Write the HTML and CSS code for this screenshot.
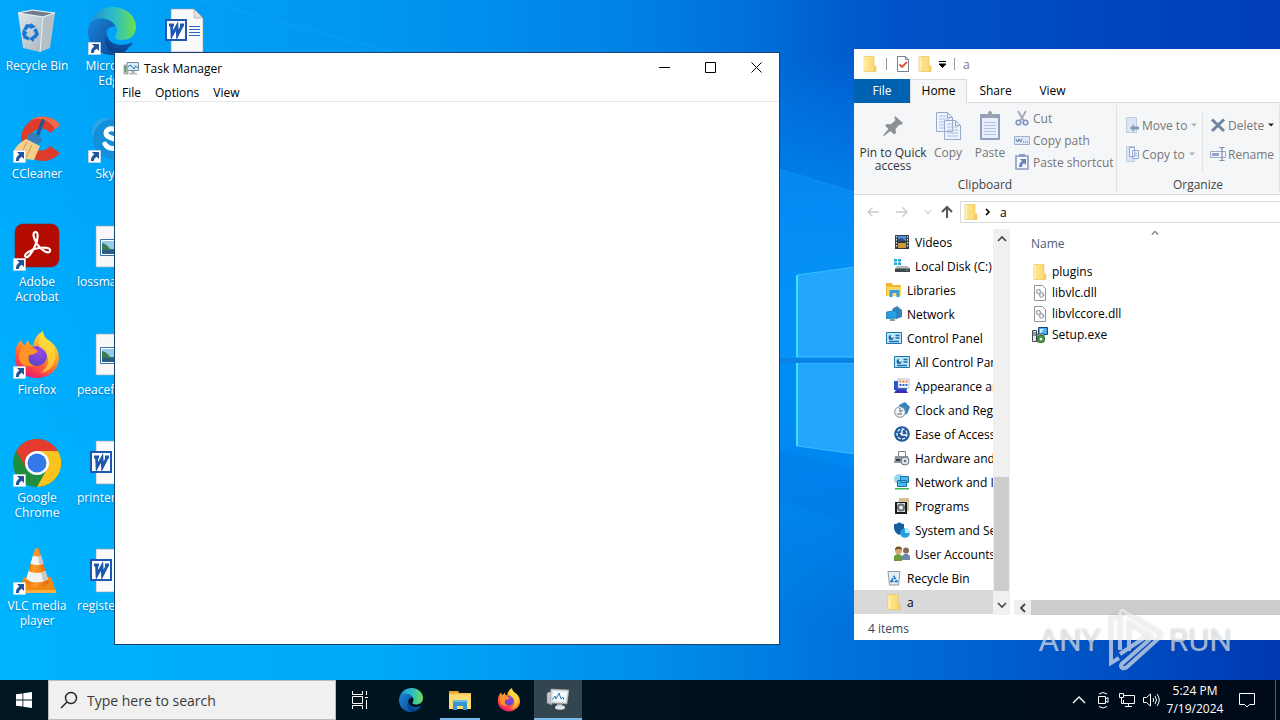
FILE: index.html
```
<!DOCTYPE html>
<html lang="en">
<head>
    <meta charset="UTF-8">
    <meta name="viewport" content="width=device-width, initial-scale=1.0">
    <title>Desktop</title>
    <link rel="stylesheet" href="styles.css">
</head>
<body>
    <!-- Icon shapes -->
    <svg class="sprite" aria-hidden="true">
        <defs>
            <linearGradient id="edge-a" x1="0" y1="0" x2="1" y2="0"><stop offset="0" stop-color="#1b8fd8"/><stop offset=".55" stop-color="#2fbfc4"/><stop offset="1" stop-color="#6be04c"/></linearGradient>
            <linearGradient id="edge-b" x1="0" y1="0" x2="1" y2="1"><stop offset="0" stop-color="#1c86d8"/><stop offset="1" stop-color="#0a4a9c"/></linearGradient>
            <linearGradient id="fx-a" x1=".8" y1="0" x2=".3" y2="1"><stop offset="0" stop-color="#fff04a"/><stop offset=".4" stop-color="#ffa62b"/><stop offset=".7" stop-color="#ff5a36"/><stop offset="1" stop-color="#e8127a"/></linearGradient>
            <radialGradient id="fx-b" cx=".6" cy=".3" r=".8"><stop offset="0" stop-color="#a044e0"/><stop offset="1" stop-color="#4c48c8"/></radialGradient>
            <linearGradient id="cone" x1="0" y1="0" x2="1" y2="0"><stop offset="0" stop-color="#e86e00"/><stop offset=".4" stop-color="#ff9a2a"/><stop offset="1" stop-color="#e06400"/></linearGradient>
            <linearGradient id="bin-g" x1="0" y1="0" x2="1" y2="1"><stop offset="0" stop-color="#dfe6ea"/><stop offset="1" stop-color="#a9b5bf"/></linearGradient>
            <linearGradient id="folder-g" x1="0" y1="0" x2="1" y2="0"><stop offset="0" stop-color="#ffe793"/><stop offset="1" stop-color="#fbd76b"/></linearGradient>
        </defs>
        <symbol id="i-shortcut" viewBox="0 0 13 13">
            <path fill="#fff" stroke="#b8c4cc" stroke-width=".5" d="M.3.3h12.4v12.4H.3z"/>
            <path fill="#22539c" d="M4 2h7v7L8.700 6.800Q5.800 8.300 5.700 11L3 11Q2.600 6.500 6.300 4.400z"/>
        </symbol>
        <symbol id="i-bin" viewBox="0 0 48 48">
            <path fill="url(#bin-g)" d="M5 6 30 10 27 45 10 41z"/>
            <path fill="#8f9ca6" d="M5 6 19 3 42 6 30 10z"/>
            <path fill="#6f7d88" d="M9 6 20 4 38 6 30 9z"/>
            <path fill="#b4c0c8" d="M30 10 42 6 37 41 27 45z"/>
            <path fill="none" stroke="#eef3f6" d="M5 6 30 10 42 6 19 3zM30 10 27 45"/>
            <path fill="none" stroke="#1477d4" stroke-width="3.500" d="M12 23l2-4 5 0M22 22l2 5-3 4M16 32l-4-2-1-4"/>
            <path fill="#1477d4" d="M18 16l5 4-6 2zM21 28v7l-5-3zM9 28l1-6 5 4z"/>
        </symbol>
        <symbol id="i-edge" viewBox="0 0 48 48">
            <path fill="url(#edge-a)" d="M1 20C4 7 13 0 25 0c13 0 23 9 23 20 0 9-7 13-14 13-5 0-8-2-7-4 3-3 3-9-2-13C17 9 4 11 1 20z"/>
            <path fill="url(#edge-b)" d="M0 24C0 14 9 10 17 12c6 1 10 5 10 8-6-2-10 4-9 12 1 7 5 12 9 16C12 49 0 39 0 24z"/>
            <path fill="#0d4f9e" d="M19 25c-3 9 3 20 14 19 5-1 9-4 11-7 1-1 0-2-1-1-12 5-25 0-24-11z"/>
            <path fill="#0a4690" d="M17 29c-1 11 5 19 13 18 4 0 8-3 11-6-11 4-21-1-24-12z"/>
        </symbol>
        <symbol id="i-word" viewBox="0 0 48 48">
            <path fill="#fafafa" stroke="#9a9a9a" stroke-width=".6" d="M8 2h23l9 9v34H8z"/>
            <path fill="#e3e3e3" stroke="#9a9a9a" stroke-width=".6" d="M31 2v9h9z"/>
            <path stroke="#2a66bb" stroke-width="1.200" d="M26 19.500h11M26 22.500h11M26 25.500h11M26 28.500h11"/>
            <path fill="#fff" stroke="#1d57b0" stroke-width="2" d="M3 13h20v20H3z"/>
            <path fill="none" stroke="#1d57b0" stroke-width="2.800" d="M6 18h5M8.500 18l.5 10 5-9 .5 9 5-10M17 18h4"/>
        </symbol>
        <symbol id="i-ccleaner" viewBox="0 0 48 48">
            <path fill="#dd3b2c" d="M47 10A22 22 0 1 0 47 38L37 31a11 11 0 1 1 0-13z"/>
            <path fill="#f26a4a" d="M47 10C40 0 25-1 16 6c10-4 20-2 26 8z"/>
            <path stroke="#25588f" stroke-width="3.500" stroke-linecap="round" d="M30 6 23 24"/>
            <path fill="#3180bd" d="M15 20c5-4 13-1 14 6l-5 5-11-5z"/>
            <path fill="#f3cf8c" d="M13 24 27 31 21 45 4 43C-2 38 1 31 13 24z"/>
            <path stroke="#cf9a4a" d="M14 27 7 41M19 30 13 43" fill="none"/>
        </symbol>
        <symbol id="i-skype" viewBox="0 0 48 48">
            <circle cx="18" cy="17" r="14" fill="#2ba6e8"/><circle cx="31" cy="31" r="14" fill="#1b9de2"/><circle cx="25" cy="24" r="20" fill="#1490da"/>
            <path fill="none" stroke="#fff" stroke-width="5" stroke-linecap="round" d="M31 17c-2-4-13-5-13 1 0 7 14 4 14 11 0 6-12 6-15 0"/>
        </symbol>
        <symbol id="i-acrobat" viewBox="0 0 48 48">
            <rect x="2" y="1" width="44" height="43" rx="8" fill="#b30b00" stroke="#7c2a2a" stroke-width=".6"/>
            <path fill="none" stroke="#fff" stroke-width="2.200" d="M22 9c4-1 3 8 0 14-3 7-7 12-9 11-4-2 5-8 13-9 7-1 12 0 11 3-1 4-9-1-13-7-3-5-5-11-2-12z"/>
        </symbol>
        <symbol id="i-picture" viewBox="0 0 48 48">
            <path fill="#f8f8f8" stroke="#a0a8b0" stroke-width=".6" d="M8 3h32v41H8z"/>
            <path fill="#fff" stroke="#3971a8" d="M12.500 16.500h23v16h-23z"/>
            <path fill="#98c8ea" d="M14 18h20v13H14z"/>
            <path fill="#397a4f" d="M14 20q5 1 8 6h12v2H14z"/><path fill="#285d86" d="M14 27h20v4H14z"/>
        </symbol>
        <symbol id="i-firefox" viewBox="0 0 48 48">
            <path fill="url(#fx-a)" d="M8 9q1 4 4 5l3-5q1 5 5 6 1-10 10-15 0 6 7 10 9 7 9 17a22 20 0 0 1-44 0Q1 16 8 9z"/>
            <circle cx="24" cy="25" r="10" fill="url(#fx-b)"/>
            <path fill="#ff9326" d="M9 16q5-3 12 1l4 3q-3 4-9 4-2 8 5 11Q5 37 6 24z"/>
            <path fill="#ffe03d" d="M30 1q0 6 7 10 7 7 5 18-3 12-15 13 11-7 7-18-2-5-8-8-1-8 4-15z" opacity=".7"/>
        </symbol>
        <symbol id="i-chrome" viewBox="0 0 48 48">
            <circle cx="24" cy="24" r="24" fill="#1e8e3e"/>
            <path fill="#fcc31e" d="M24 12h21A24 24 0 0 1 24 48l10-18z"/>
            <path fill="#e33b2e" d="M3.200 12A24 24 0 0 1 44.800 12H24a12 12 0 0 0-11 17z"/>
            <circle cx="24" cy="24" r="12" fill="#fff"/><circle cx="24" cy="24" r="9.500" fill="#3478ea"/>
        </symbol>
        <symbol id="i-vlc" viewBox="0 0 48 48">
            <path fill="#f28a10" d="M11 30h27l5 15H5z"/><path fill="#ffad3f" d="M5 43h38v3H5z"/>
            <path fill="url(#cone)" d="M22 2q2-2 4 0l10 34q-12 8-24 0z"/>
            <path fill="#f3f3f3" d="M20 8.500q4 2 8 0l2.500 8q-6.500 3-13 0zM15.500 24q8.500 4 17 0l2.500 8.500q-11 6-22 0z"/>
            <path fill="#c9c9c9" d="M25 9.200 28 8.500l2.500 8-4 1zM28 25.300l4.500-1.300 2.500 8.500-5 2z"/>
        </symbol>
        <symbol id="i-taskmgr" viewBox="0 0 16 16">
            <path fill="#b9c7b9" stroke="#7b8a80" stroke-width=".6" d="M1 5h4v9H1z"/><path fill="#48a055" d="M1.500 6h1.500v6H1.500z"/>
            <path fill="#d6edfa" stroke="#7a8a96" d="M4 2.500h11.500v8H4z"/>
            <path fill="none" stroke="#2578b5" d="M4.500 7.500 7 5l2 1.500L11 9l1.500-3L15 8"/>
            <path fill="#b5bdc4" d="M8 11h4v2H8zM6 13h8v1.500H6z"/>
        </symbol>
        <symbol id="i-folder" viewBox="0 0 16 16">
            <path fill="url(#folder-g)" stroke="#e6bd55" stroke-width=".6" d="M2 .5h10v10l2 0v5H2z"/>
            <path fill="#f4cb56" d="M12 10.500 13.700 9v5.500L12 15.500z"/><path fill="#fff2bd" d="M2.500 1H4v14H2.500z"/>
        </symbol>
        <symbol id="i-check" viewBox="0 0 16 16">
            <path fill="#fff" stroke="#77818d" d="M2.500.5h8l3 3v12h-11z"/><path fill="none" stroke="#77818d" d="M10.500.5v3h3"/>
            <path fill="none" stroke="#e2512f" stroke-width="1.800" d="M4.500 8.500 7 11l5-5"/>
        </symbol>
        <symbol id="i-pin" viewBox="0 0 24 24">
            <path fill="#8b9096" d="M14 2 22 9l-2 2-1.500-.5-4 4.500.5 4-2 1.500L9.500 17 3 22l-1-.5L7.500 15 4 11.500 6 10l4 .3 4.300-4L13.500 4z"/>
        </symbol>
        <symbol id="i-copy" viewBox="0 0 28 32">
            <path fill="#edf2fb" stroke="#98a9cc" d="M2.500 2.500h11l5 5v14h-16zM10.500 10.500h11l5 5v14h-16z"/>
            <path stroke="#adc0e4" d="M5 6h7M5 9h11M5 12h5M5 15h5M5 18h5M13 14h7M13 17h11M13 20h11M13 23h11M13 26h11"/>
            <path fill="none" stroke="#98a9cc" d="M13.500 2.500v5h5M21.500 10.500v5h5"/>
        </symbol>
        <symbol id="i-paste" viewBox="0 0 28 32">
            <rect x="4" y="4" width="20" height="26" rx="1" fill="#8fa0c1"/><path fill="#eaf0fb" d="M6 8h16v20H6z"/>
            <path stroke="#b2c1df" d="M8 12.500h12M8 15.500h12M8 18.500h12M8 21.500h12M8 24.500h12"/>
            <path fill="#9aa3b2" d="M8 4h4q0-3 2-3t2 3h4v4H8z"/>
        </symbol>
        <symbol id="i-cut" viewBox="0 0 16 16">
            <path stroke="#a0a8b5" stroke-width="1.800" d="M4 1l6 10M12 1 6 11"/>
            <circle cx="4.500" cy="12.500" r="2.300" fill="none" stroke="#8193bc" stroke-width="1.600"/><circle cx="11.500" cy="12.500" r="2.300" fill="none" stroke="#8193bc" stroke-width="1.600"/>
        </symbol>
        <symbol id="i-path" viewBox="0 0 16 16">
            <path fill="#dae5f6" stroke="#9fb0cf" d="M.5 4.500h15v8H.5z"/><path fill="none" stroke="#6078a5" d="M2 7l1.500 3L5 7l1.500 3L8 7M9 10h1M11 10h1M13 10h1"/>
        </symbol>
        <symbol id="i-pasteshort" viewBox="0 0 16 16">
            <path fill="#f4f7fd" stroke="#8b9cc0" stroke-width="1.600" d="M2 2h12v13H2z"/><path fill="#8b9cc0" d="M5 0h6v3H5z"/>
            <path fill="#6481b8" d="M6 5h6v6L10 9q-2 1-2 4H5q0-4 3-6z"/>
        </symbol>
        <symbol id="i-moveto" viewBox="0 0 16 16">
            <path fill="#dce5f3" stroke="#c0cce0" d="M2.500.5h10v15h-10z"/><path fill="#8799bd" d="M6 11l4-4v2.500h5v3h-5V15z"/>
        </symbol>
        <symbol id="i-copyto" viewBox="0 0 16 16">
            <path fill="#dce5f3" stroke="#c0cce0" d="M2.500.5h8v15h-8z"/><path fill="#f4f7fd" stroke="#95a7cb" d="M5.500 1.500h5v9h-5zM8.500 4.500h6v8h-6z"/><path stroke="#95a7cb" d="M10 7.500h3M10 9.500h3"/>
        </symbol>
        <symbol id="i-delete" viewBox="0 0 16 16"><path stroke="#7182a3" stroke-width="3" d="M2 2.500 14 14M14 2.500 2 14"/></symbol>
        <symbol id="i-rename" viewBox="0 0 16 16">
            <path fill="#f3f6fc" stroke="#9cabc9" d="M.5 5.500h15v6H.5z"/><path fill="#8fa2c8" d="M2 7h7v3H2z"/><path fill="none" stroke="#7d8ead" stroke-width="1.200" d="M9.500 1.500h5M12 1.500v13M9.500 14.500h5"/>
        </symbol>
        <symbol id="i-back" viewBox="0 0 14 14"><path fill="none" stroke="currentColor" stroke-width="1.400" d="M13 7H2M6.500 2.500 2 7l4.500 4.500"/></symbol>
        <symbol id="i-forward" viewBox="0 0 14 14"><path fill="none" stroke="currentColor" stroke-width="1.400" d="M1 7h11M7.500 2.500 12 7l-4.500 4.500"/></symbol>
        <symbol id="i-up" viewBox="0 0 14 14"><path fill="none" stroke="currentColor" stroke-width="2" d="M7 13V2M2 7l5-5 5 5"/></symbol>
        <symbol id="i-chev-up" viewBox="0 0 10 10"><path fill="none" stroke="currentColor" stroke-width="1.600" d="M1 7l4-4 4 4"/></symbol>
        <symbol id="i-chev-down" viewBox="0 0 10 10"><path fill="none" stroke="currentColor" stroke-width="1.600" d="M1 3l4 4 4-4"/></symbol>
        <symbol id="i-chev-left" viewBox="0 0 10 10"><path fill="none" stroke="currentColor" stroke-width="1.800" d="M7 1 3 5l4 4"/></symbol>
        <symbol id="i-chev-right" viewBox="0 0 10 10"><path fill="none" stroke="currentColor" stroke-width="1.600" d="M3 2l3 3-3 3"/></symbol>
        <symbol id="i-drop" viewBox="0 0 6 4"><path fill="currentColor" d="M0 .5h6L3 3.500z"/></symbol>
        <symbol id="i-video" viewBox="0 0 16 16">
            <path fill="#343a40" d="M1 1h14v14H1z"/><path fill="#4d8fe0" d="M4 2h8v5H4z"/><path fill="#c79a35" d="M4 9h8v5H4z"/><path fill="#28507a" d="M4 5l4-1 4 3H4z"/>
            <path stroke="#dde4ea" stroke-width="1.200" stroke-dasharray="1.500 1.500" d="M2.500 2v12M13.500 2v12"/>
        </symbol>
        <symbol id="i-disk" viewBox="0 0 16 16">
            <path fill="#19a8d8" d="M0 1h3v2.500H0zM4 1h3v2.500H4zM0 4.500h3V7H0zM4 4.500h3V7H4z"/><path fill="#b5bbc0" d="M3 8h11l2 3H1z"/><path fill="#3e454b" d="M1 10.500h15V14H1z"/><path fill="#34d158" d="M12 11.500h2v1h-2z"/>
        </symbol>
        <symbol id="i-library" viewBox="0 0 16 16">
            <path fill="#f2b632" d="M0 1h6l1 2h8v11H0z"/><path fill="#ffd968" d="M1 5h14v9H1z"/><path fill="none" stroke="#3d98dd" stroke-width="3" d="M5 15V9.500h7V15"/>
        </symbol>
        <symbol id="i-network" viewBox="0 0 16 16">
            <path fill="#3c81b5" d="M6 3 11 0l5 4v7l-6 2z"/><path fill="#28a0e5" stroke="#1371ad" stroke-width=".8" d="M0.500 6 11 4.500v7.500L.5 12.500z"/><path fill="#7f9aad" d="M4 13h5v2H4z"/>
        </symbol>
        <symbol id="i-cpl" viewBox="0 0 16 16">
            <path fill="#b9e6fa" stroke="#1f75a9" d="M.5 2.500h15v11H.5z"/><circle cx="5" cy="7.500" r="2.500" fill="#246ba5"/><path fill="#fff" d="M5 7.500V5a2.500 2.500 0 0 1 2.500 2.500z"/><path stroke="#1c6da8" stroke-width="1.400" d="M9.500 5.500h4M9.500 8h4M3 11.500h10"/>
        </symbol>
        <symbol id="i-appearance" viewBox="0 0 16 16">
            <path fill="#2d55c9" d="M0 3h13v9H0z"/><path fill="#fff" stroke="#8090b0" stroke-width=".6" d="M4 1h11v9H4z"/><path stroke="#ef7230" stroke-width="2" stroke-dasharray="2 1" d="M5.500 3.500H14"/><path stroke="#3562c8" stroke-width="2" stroke-dasharray="2 1" d="M5.500 7H14"/><path fill="#3530b5" d="M2 12h10l2 3H0z"/>
        </symbol>
        <symbol id="i-clock" viewBox="0 0 16 16">
            <path fill="#3484bd" d="M5 3 11 0l5 5-3 7-5 1z"/><circle cx="6" cy="10" r="5.300" fill="#f2f5f7" stroke="#81909c"/><path fill="none" stroke="#4d6475" d="M6 6v4l3-2M3 12h5"/>
        </symbol>
        <symbol id="i-ease" viewBox="0 0 16 16">
            <circle cx="8" cy="8" r="7.800" fill="#1b5b9e"/><circle cx="8" cy="8" r="5" fill="none" stroke="#fff" stroke-width="1.300" stroke-dasharray="3 1.500"/><path fill="none" stroke="#fff" stroke-width="1.400" d="M8 4v5h5M6 7l2 2"/>
        </symbol>
        <symbol id="i-hardware" viewBox="0 0 16 16">
            <path fill="#fff" stroke="#7b8790" d="M4.500 1.500h7v5h-7z"/><path fill="#8d979f" d="M1 6h13l1 7H0z"/><circle cx="11" cy="11" r="4" fill="#dce2e6" stroke="#65717a"/><circle cx="11" cy="11" r="1.200" fill="#65717a"/><path fill="#333b42" d="M2 9h4v2H2z"/>
        </symbol>
        <symbol id="i-netint" viewBox="0 0 16 16">
            <circle cx="5" cy="5" r="5" fill="#9ad3ed"/><path fill="#4eb9ed" stroke="#1676a8" d="M6.500 2.500h8v6h-8zM3.500 6.500h9v6h-9z"/><path fill="#41b44b" d="M1 14h14v1.500H1z"/>
        </symbol>
        <symbol id="i-programs" viewBox="0 0 16 16">
            <path fill="#d9bd93" d="M5 0h10v13H5z"/><path fill="#191b1d" d="M1 4h12v12H1z"/><path fill="#dfe2e4" d="M3 5h8v9H3z"/><circle cx="7" cy="9.500" r="4" fill="#6a7277"/><circle cx="7" cy="9.500" r="2" fill="#e8f0ec"/>
        </symbol>
        <symbol id="i-system" viewBox="0 0 16 16">
            <path fill="#175e9c" d="M0 2q4 0 5-2 2 2 5 2v5q-1 4-5 6Q0 10 0 6z"/><circle cx="11" cy="11" r="4.800" fill="#249fe3"/><path fill="#b5e7ff" d="M11 11V6a5 5 0 0 1 5 5z"/>
        </symbol>
        <symbol id="i-users" viewBox="0 0 16 16">
            <circle cx="4.500" cy="4.500" r="3.500" fill="#d7a66e"/><circle cx="12" cy="4.500" r="3" fill="#8a6a50"/><path fill="#6a9e3c" d="M0 15V10q4-4 8 0v5z"/><path fill="#6d88aa" d="M8 14v-4q4-5 8 0v4z"/><path fill="#7b4f2b" d="M1 4q0-4 4-3.500 3 0 3 3-4-1-7 .5z"/>
        </symbol>
        <symbol id="i-smallbin" viewBox="0 0 16 16">
            <path fill="#e6edf1" stroke="#8e9ba5" d="M2 1.500h12L12.500 15h-9z"/><path fill="none" stroke="#1477d4" stroke-width="1.600" stroke-dasharray="4 1" d="M5 11.500 8 6.500l3 5z"/>
        </symbol>
        <symbol id="i-dll" viewBox="0 0 16 16">
            <path fill="#fff" stroke="#8f959b" d="M2.500.5h8l3 3v12h-11z"/><circle cx="6.500" cy="6.500" r="2" fill="none" stroke="#8d959b" stroke-width="1.600" stroke-dasharray="1 .5"/><circle cx="9.500" cy="10" r="2" fill="none" stroke="#8d959b" stroke-width="1.600" stroke-dasharray="1 .5"/>
        </symbol>
        <symbol id="i-setup" viewBox="0 0 16 16">
            <path fill="#4caff2" stroke="#174970" d="M6.500.5h9v7h-9z"/><path fill="#c9e9ff" d="M8 2h4L9 6H8z"/><path fill="#e3e5e8" stroke="#454b51" d="M.5 3.500h4v11h-4z"/><path stroke="#454b51" d="M1 6h3M1 8h3"/><path fill="#a7aeb5" stroke="#333" stroke-width=".6" d="M5 7h7v8H5z"/><circle cx="9" cy="12" r="3.700" fill="#4c9e43" stroke="#1f5e21" stroke-width=".7"/><circle cx="9" cy="12" r="1.200" fill="#fff"/>
        </symbol>
        <symbol id="i-explorer" viewBox="0 0 24 24">
            <path fill="#e8a723" d="M1 3h9l2 3H1z"/><path fill="#ffdc72" d="M1 5h22v16H1z"/><path fill="#f2c14a" d="M1 5h22v1.500H1z"/><path fill="#3b95d4" d="M5 13h14v9h-4v-4H9v4H5z"/><path fill="#6fbceb" d="M5 12h14v2H5z"/>
        </symbol>
        <symbol id="i-monitor" viewBox="0 0 24 24">
            <path fill="#c8cccf" stroke="#7e8589" stroke-width=".6" d="M1 6l5-2v14l-5-2z"/><path fill="#d6dadd" stroke="#959b9f" stroke-width=".6" d="M5 2l18 1-2 14-17-1z"/><path fill="#f8fcff" d="M7 4l14 1-1.500 10L6 14z"/><path fill="none" stroke="#287abb" d="M6 13l3-4 1 3 3-6 2 6 2-2 1 3"/><path fill="#9da4a8" d="M11 17h5v2h-5z"/><ellipse cx="14" cy="20.500" rx="5" ry="2.200" fill="#e2e5e7"/>
        </symbol>
    </svg>

    <!-- Wallpaper -->
    <svg class="wallpaper" viewBox="0 0 1280 720" preserveAspectRatio="none" aria-hidden="true">
        <defs>
            <linearGradient id="sky" x1="0" y1="0" x2="1" y2="0"><stop offset="0" stop-color="#00a8fb"/><stop offset=".3" stop-color="#0096f0"/><stop offset=".5" stop-color="#0080e4"/><stop offset=".6" stop-color="#006cd8"/><stop offset=".7" stop-color="#0052c8"/><stop offset="1" stop-color="#003eb8"/></linearGradient>
            <linearGradient id="floor" x1="0" y1="0" x2="1" y2="0"><stop offset="0" stop-color="#00b4ff"/><stop offset=".3" stop-color="#00a8f8"/><stop offset=".5" stop-color="#0090ea"/><stop offset=".65" stop-color="#0074dc"/><stop offset=".8" stop-color="#005ccc"/><stop offset="1" stop-color="#0038b2"/></linearGradient>
            <linearGradient id="fade" x1="0" y1="0" x2="0" y2="1"><stop offset=".1" stop-color="#000"/><stop offset=".8" stop-color="#fff"/></linearGradient>
            <mask id="low"><path fill="url(#fade)" d="M0 0h1280v720H0z"/></mask>
            <radialGradient id="glow" cx="880" cy="340" r="290" gradientUnits="userSpaceOnUse"><stop offset="0" stop-color="#00a0ff" stop-opacity=".9"/><stop offset=".5" stop-color="#0095ff" stop-opacity=".6"/><stop offset="1" stop-color="#0095ff" stop-opacity="0"/></radialGradient>
        </defs>
        <path fill="url(#sky)" d="M0 0h1280v720H0z"/>
        <path fill="url(#floor)" mask="url(#low)" d="M0 0h1280v720H0z"/>
        <path fill="url(#glow)" d="M0 0h1280v720H0z"/>
        <path fill="#0d98ff" opacity=".4" d="M779 169 880 200v160H779z"/>
        <path stroke="#2aa4f5" opacity=".4" d="M200 0 420 60M779 169 880 200"/>
        <path fill="#006fe0" opacity=".2" d="M780 450 880 475v60L780 500z"/>
        <path fill="#24a6ff" stroke="#35bfff" d="M797 275 870 265v92h-73zM797 363h73v93l-73-10z"/>
        <path fill="#0a82e6" d="M780 358h90v5h-90z"/>
        <path stroke="#3de0ff" stroke-width="2" d="M797 275v82M797 363v83"/>
    </svg>

    <main class="desktop">
        <a class="shortcut" href="#"><svg><use href="#i-bin"/></svg><span>Recycle Bin</span></a>
        <a class="shortcut" href="#"><svg><use href="#i-ccleaner"/></svg><svg class="arrow"><use href="#i-shortcut"/></svg><span>CCleaner</span></a>
        <a class="shortcut" href="#"><svg><use href="#i-acrobat"/></svg><svg class="arrow"><use href="#i-shortcut"/></svg><span>Adobe Acrobat</span></a>
        <a class="shortcut" href="#"><svg><use href="#i-firefox"/></svg><svg class="arrow"><use href="#i-shortcut"/></svg><span>Firefox</span></a>
        <a class="shortcut" href="#"><svg><use href="#i-chrome"/></svg><svg class="arrow"><use href="#i-shortcut"/></svg><span>Google Chrome</span></a>
        <a class="shortcut" href="#"><svg><use href="#i-vlc"/></svg><svg class="arrow"><use href="#i-shortcut"/></svg><span>VLC media player</span></a>
        <a class="shortcut" href="#"><svg><use href="#i-edge"/></svg><svg class="arrow"><use href="#i-shortcut"/></svg><span>Microsoft Edge</span></a>
        <a class="shortcut" href="#"><svg><use href="#i-skype"/></svg><svg class="arrow"><use href="#i-shortcut"/></svg><span>Skype</span></a>
        <a class="shortcut" href="#"><svg><use href="#i-picture"/></svg><span>lossmany.jpg</span></a>
        <a class="shortcut" href="#"><svg><use href="#i-picture"/></svg><span>peacefull.jpg</span></a>
        <a class="shortcut" href="#"><svg><use href="#i-word"/></svg><span>printerme.rtf</span></a>
        <a class="shortcut" href="#"><svg><use href="#i-word"/></svg><span>registered.rtf</span></a>
        <a class="shortcut" href="#" aria-label="Document"><svg><use href="#i-word"/></svg></a>
    </main>

    <!-- Task Manager -->
    <section class="window task-manager">
        <header class="titlebar">
            <svg class="icon"><use href="#i-taskmgr"/></svg>
            <h1>Task Manager</h1>
            <div class="controls">
                <button type="button" aria-label="Minimize"><svg viewBox="0 0 11 11"><path d="M0 5.500h11"/></svg></button>
                <button type="button" aria-label="Maximize"><svg viewBox="0 0 11 11"><path d="M.5.5h10v10H.5z"/></svg></button>
                <button type="button" aria-label="Close"><svg viewBox="0 0 11 11"><path d="M.5.5l10 10M10.500.5l-10 10"/></svg></button>
            </div>
        </header>
        <nav class="menubar">
            <button type="button">File</button>
            <button type="button">Options</button>
            <button type="button">View</button>
        </nav>
    </section>

    <!-- File Explorer -->
    <section class="window explorer">
        <header class="quick-bar">
            <svg class="icon"><use href="#i-folder"/></svg>
            <i class="bar"></i>
            <button type="button" aria-label="Properties"><svg class="icon"><use href="#i-check"/></svg></button>
            <button type="button" aria-label="New folder"><svg class="icon"><use href="#i-folder"/></svg></button>
            <button type="button" class="customize" aria-label="Customize"><svg viewBox="0 0 7 7"><path d="M0 .5h7M0 3h7L3.500 6.500z"/></svg></button>
            <i class="bar"></i>
            <h2>a</h2>
        </header>
        <nav class="tabs">
            <a class="file-tab" href="#">File</a>
            <a class="active" href="#">Home</a>
            <a href="#">Share</a>
            <a href="#">View</a>
        </nav>
        <div class="ribbon">
            <div class="group clipboard">
                <div class="tools">
                    <button type="button" class="big pin"><svg><use href="#i-pin"/></svg><span>Pin to Quick access</span></button>
                    <button type="button" class="big off"><svg><use href="#i-copy"/></svg><span>Copy</span></button>
                    <button type="button" class="big off"><svg><use href="#i-paste"/></svg><span>Paste</span></button>
                    <div class="stack">
                        <button type="button" class="small"><svg class="icon"><use href="#i-cut"/></svg>Cut</button>
                        <button type="button" class="small"><svg class="icon"><use href="#i-path"/></svg>Copy path</button>
                        <button type="button" class="small"><svg class="icon"><use href="#i-pasteshort"/></svg>Paste shortcut</button>
                    </div>
                </div>
                <p>Clipboard</p>
            </div>
            <div class="group organize">
                <div class="tools">
                    <div class="stack wide">
                        <button type="button" class="small"><svg class="icon"><use href="#i-moveto"/></svg>Move to<svg class="drop"><use href="#i-drop"/></svg></button>
                        <button type="button" class="small"><svg class="icon"><use href="#i-copyto"/></svg>Copy to<svg class="drop"><use href="#i-drop"/></svg></button>
                    </div>
                    <div class="stack wide">
                        <button type="button" class="small"><svg class="icon"><use href="#i-delete"/></svg>Delete<svg class="drop dark"><use href="#i-drop"/></svg></button>
                        <button type="button" class="small"><svg class="icon"><use href="#i-rename"/></svg>Rename</button>
                    </div>
                </div>
                <p>Organize</p>
            </div>
        </div>
        <div class="address-row">
            <button type="button" class="faint" aria-label="Back"><svg><use href="#i-back"/></svg></button>
            <button type="button" class="faint" aria-label="Forward"><svg><use href="#i-forward"/></svg></button>
            <button type="button" class="faint recent" aria-label="Recent locations"><svg><use href="#i-chev-down"/></svg></button>
            <button type="button" class="up" aria-label="Up"><svg><use href="#i-up"/></svg></button>
            <div class="address">
                <svg class="icon"><use href="#i-folder"/></svg>
                <svg class="crumb"><use href="#i-chev-right"/></svg>
                <a href="#">a</a>
            </div>
        </div>
        <div class="content">
            <nav class="tree">
                <a class="deep" href="#"><svg class="icon"><use href="#i-video"/></svg>Videos</a>
                <a class="deep" href="#"><svg class="icon"><use href="#i-disk"/></svg>Local Disk (C:)</a>
                <a href="#"><svg class="icon"><use href="#i-library"/></svg>Libraries</a>
                <a href="#"><svg class="icon"><use href="#i-network"/></svg>Network</a>
                <a href="#"><svg class="icon"><use href="#i-cpl"/></svg>Control Panel</a>
                <a class="deep" href="#"><svg class="icon"><use href="#i-cpl"/></svg>All Control Panel Items</a>
                <a class="deep" href="#"><svg class="icon"><use href="#i-appearance"/></svg>Appearance and Personalization</a>
                <a class="deep" href="#"><svg class="icon"><use href="#i-clock"/></svg>Clock and Region</a>
                <a class="deep" href="#"><svg class="icon"><use href="#i-ease"/></svg>Ease of Access</a>
                <a class="deep" href="#"><svg class="icon"><use href="#i-hardware"/></svg>Hardware and Sound</a>
                <a class="deep" href="#"><svg class="icon"><use href="#i-netint"/></svg>Network and Internet</a>
                <a class="deep" href="#"><svg class="icon"><use href="#i-programs"/></svg>Programs</a>
                <a class="deep" href="#"><svg class="icon"><use href="#i-system"/></svg>System and Security</a>
                <a class="deep" href="#"><svg class="icon"><use href="#i-users"/></svg>User Accounts</a>
                <a href="#"><svg class="icon"><use href="#i-smallbin"/></svg>Recycle Bin</a>
                <a class="selected" href="#"><svg class="icon"><use href="#i-folder"/></svg>a</a>
            </nav>
            <div class="scroll-v">
                <button type="button" aria-label="Scroll up"><svg><use href="#i-chev-up"/></svg></button>
                <div class="thumb"></div>
                <button type="button" aria-label="Scroll down"><svg><use href="#i-chev-down"/></svg></button>
            </div>
            <div class="files">
                <table>
                    <thead>
                        <tr><th>Name<svg class="sort"><use href="#i-chev-up"/></svg></th></tr>
                    </thead>
                    <tbody>
                        <tr><td><svg class="icon"><use href="#i-folder"/></svg>plugins</td></tr>
                        <tr><td><svg class="icon"><use href="#i-dll"/></svg>libvlc.dll</td></tr>
                        <tr><td><svg class="icon"><use href="#i-dll"/></svg>libvlccore.dll</td></tr>
                        <tr><td><svg class="icon"><use href="#i-setup"/></svg>Setup.exe</td></tr>
                    </tbody>
                </table>
                <div class="scroll-h">
                    <button type="button" aria-label="Scroll left"><svg><use href="#i-chev-left"/></svg></button>
                    <div class="thumb"></div>
                </div>
            </div>
        </div>
        <footer class="status">4 items</footer>
    </section>

    <div class="watermark">
        <span>ANY</span>
        <svg viewBox="0 0 56 64"><path d="M12 9H4v46l8-5M13 4v38M13 4q2-3 5 0l34 20q3 3 0 6L20 59q-5 3-6-1 0-2 3-4l25-22q3-3 0-5L22 15v28M13 46l27-18"/></svg>
        <span>RUN</span>
    </div>

    <!-- Taskbar -->
    <footer class="taskbar">
        <button type="button" class="start" aria-label="Start"><svg viewBox="0 0 16 16"><path d="M0 2.300 6.500 1.400v6.200H0zM7.300 1.300 16 0v7.600H7.300zM0 8.400h6.500v6.200L0 13.700zM7.300 8.400H16V16l-8.700-1.300z"/></svg></button>
        <label class="search">
            <svg viewBox="0 0 18 18"><circle cx="11" cy="7" r="5.500"/><path d="M7 11 1 17"/></svg>
            <input type="text" placeholder="Type here to search" aria-label="Search">
        </label>
        <div class="apps">
            <button type="button" class="view" aria-label="Task View"><svg viewBox="0 0 18 18"><path d="M1.500 0v3.500h10V0M1.500 5.500h10v7h-10zM1.500 18v-3.500h10V18M15.500 0v4M15.500 9v9M14 6.500h3"/></svg></button>
            <button type="button" aria-label="Microsoft Edge"><svg><use href="#i-edge"/></svg></button>
            <button type="button" class="running" aria-label="File Explorer"><svg><use href="#i-explorer"/></svg></button>
            <button type="button" aria-label="Firefox"><svg><use href="#i-firefox"/></svg></button>
            <button type="button" class="current" aria-label="Task Manager"><svg><use href="#i-monitor"/></svg></button>
        </div>
        <div class="tray">
            <button type="button" aria-label="Hidden icons"><svg viewBox="0 0 18 18"><path stroke-width="1.400" d="M3 12 9 6l6 6"/></svg></button>
            <button type="button" aria-label="Camera"><svg viewBox="0 0 18 18"><path d="M4.500 5.500h7v7h-7zM11.500 8l2.500-1.500v5L11.500 10M5 3Q9 0 13 3M5 15.500q4 3 8 0"/></svg></button>
            <button type="button" aria-label="Network"><svg viewBox="0 0 18 18"><path d="M6 4.500h10.500v8H5.500V9M10.500 12.500v3M7 15.500h7M1.500 2.500h4v4h-4zM3.500 6.500v6h2"/></svg></button>
            <button type="button" aria-label="Volume"><svg viewBox="0 0 18 18"><path d="M1.500 6.500h3l4-3.500v12l-4-3.500h-3zM11 7q1.500 2 0 4M13 5q3 4 0 8M15 3q4.500 6 0 12"/></svg></button>
            <div class="clock"><time>5:24 PM</time><time>7/19/2024</time></div>
            <button type="button" class="notes" aria-label="Notifications"><svg viewBox="0 0 18 18"><path d="M1.500 2.500h15v11h-5L9 16l-2.500-2.500h-5z"/></svg></button>
            <i class="peek"></i>
        </div>
    </footer>
</body>
</html>
```
FILE: styles.css
```
* {
    box-sizing: border-box;
}

html, body {
    height: 100%;
}

body {
    margin: 0;
    overflow: hidden;
    font-family: "Open Sans", "Noto Sans", sans-serif;
    font-size: 12px;
    line-height: 15px;
    color: #000;
    background-color: #0090f0;
}

h1, h2, p {
    margin: 0;
    font-size: 12px;
    font-weight: normal;
}

a {
    color: inherit;
    text-decoration: none;
}

button {
    display: flex;
    align-items: center;
    justify-content: center;
    padding: 0;
    border: none;
    background: none;
    font: inherit;
    color: inherit;
}

svg {
    display: block;
    flex: none;
}

.sprite {
    position: absolute;
    width: 0;
    height: 0;
}

.icon {
    width: 16px;
    height: 16px;
}

.wallpaper {
    position: absolute;
    inset: 0;
    width: 100%;
    height: 100%;
}

/* Desktop shortcuts */
.desktop {
    position: absolute;
    inset: 0 auto 40px 0;
    display: grid;
    grid-template-rows: repeat(6, 108px);
    grid-auto-columns: 75px;
    grid-auto-flow: column;
    padding-top: 7px;
}

.shortcut {
    position: relative;
    display: flex;
    flex-direction: column;
    align-items: center;
    gap: 3px;
    padding-right: 1px;
    color: #fff;
    text-align: center;
    text-shadow: 0 1px 2px rgba(0, 40, 90, 0.4);
}

.shortcut svg {
    width: 48px;
    height: 48px;
}

.shortcut span {
    width: 70px;
}

.shortcut .arrow {
    position: absolute;
    left: 13px;
    top: 35px;
    width: 13px;
    height: 13px;
}

/* Windows */
.window {
    position: absolute;
    display: flex;
    flex-direction: column;
    background-color: #fff;
}

.task-manager {
    left: 114px;
    top: 52px;
    width: 666px;
    height: 593px;
    border: 1px solid #17446f;
}

.titlebar {
    display: flex;
    align-items: center;
    height: 30px;
    padding-left: 8px;
}

.titlebar h1 {
    margin-left: 5px;
}

.controls {
    display: flex;
    height: 28px;
    margin-left: auto;
    align-self: flex-start;
}

.controls button {
    width: 46px;
}

.controls svg {
    width: 11px;
    height: 11px;
    fill: none;
    stroke: #000;
}

.menubar {
    display: flex;
    gap: 14px;
    height: 19px;
    padding-left: 7px;
    border-bottom: 1px solid #e8e8e8;
}

/* File Explorer */
.explorer {
    left: 854px;
    right: 0;
    top: 49px;
    height: 591px;
    overflow: hidden;
}

.quick-bar {
    display: flex;
    align-items: center;
    height: 30px;
    padding-left: 8px;
    gap: 6px;
    flex: none;
}

.quick-bar h2 {
    color: #777;
}

.bar {
    width: 1px;
    height: 12px;
    margin: 0 2px;
    background-color: #999;
}

.customize svg {
    width: 7px;
    height: 7px;
    stroke: #000;
    fill: #000;
}

.tabs {
    display: flex;
    height: 24px;
    border-bottom: 1px solid #dadbdc;
    flex: none;
}

.tabs a {
    width: 57px;
    margin-bottom: -1px;
    border: 1px solid transparent;
    text-align: center;
    line-height: 22px;
}

.tabs .file-tab {
    width: 56px;
    background-color: #0063b1;
    color: #fff;
}

.tabs .active {
    background-color: #f5f6f7;
    border-color: #dadbdc;
    border-bottom: none;
}

.ribbon {
    display: flex;
    height: 92px;
    background-color: #f5f6f7;
    border-bottom: 1px solid #dadbdc;
    flex: none;
}

.group {
    display: flex;
    flex-direction: column;
    margin: 2px 0;
    border-right: 1px solid #dfe1e3;
    text-align: center;
    color: #444;
}

.clipboard {
    width: 263px;
}

.organize {
    width: 163px;
}

.tools {
    display: flex;
    height: 73px;
}

.big {
    flex-direction: column;
    justify-content: flex-start;
    width: 42px;
    padding-top: 5px;
    line-height: 13px;
}

.big svg {
    width: 28px;
    height: 32px;
    margin-bottom: 4px;
}

.big.pin {
    width: 72px;
    margin-left: 1px;
    padding-top: 9px;
    padding-left: 4px;
    color: #333;
}

.pin svg {
    width: 24px;
    height: 24px;
    margin-bottom: 8px;
}

.off, .small {
    color: #777;
}

.stack {
    display: flex;
    flex-direction: column;
    padding: 2px 0 0 3px;
}

.small {
    height: 22px;
    justify-content: flex-start;
    gap: 3px;
    white-space: nowrap;
}

.stack.wide {
    width: 86px;
    height: 60px;
    padding: 2px 0 0 7px;
    margin-top: 7px;
    gap: 7px;
    border-right: 1px solid #e2e3e5;
}

.stack.wide:last-child {
    width: 76px;
    border: none;
}

.stack.wide .small {
    gap: 2px;
}

.drop {
    width: 6px;
    height: 4px;
    margin-left: 2px;
    color: #aab0b8;
}

.drop.dark {
    color: #222;
}

.address-row {
    display: flex;
    align-items: center;
    height: 34px;
    padding-left: 12px;
    color: #555;
    flex: none;
}

.address-row button {
    width: 14px;
    margin-right: 15px;
}

.address-row button svg {
    width: 14px;
    height: 14px;
}

.address-row .faint {
    color: #ccc;
}

.address-row .recent {
    width: 8px;
    margin-right: 10px;
}

.address-row .recent svg {
    width: 8px;
    height: 8px;
}

.address-row .up {
    margin-right: 6px;
    margin-left: -2px;
}

.address {
    display: flex;
    align-items: center;
    flex: 1;
    height: 22px;
    padding-left: 2px;
    border: 1px solid #d9d9d9;
    border-right: none;
    color: #000;
}

.crumb {
    width: 10px;
    height: 10px;
    margin: 0 7px 0 4px;
}

.content {
    display: flex;
    flex: 1;
    min-height: 0;
    padding-bottom: 2px;
}

.tree {
    width: 139px;
    padding-top: 1px;
    overflow: hidden;
}

.tree a {
    display: flex;
    align-items: center;
    gap: 5px;
    height: 24px;
    padding-left: 32px;
    white-space: nowrap;
}

.tree .deep {
    padding-left: 40px;
}

.tree .selected {
    background-color: #d9d9d9;
}

.scroll-v {
    display: flex;
    flex-direction: column;
    width: 17px;
    background-color: #f0f0f0;
    color: #444;
}

.scroll-v svg, .scroll-h svg {
    width: 10px;
    height: 10px;
}

.scroll-v button {
    height: 20px;
    width: 17px;
}

.scroll-v .thumb {
    height: 114px;
    width: 15px;
    margin: auto 1px 4px;
    background-color: #cdcdcd;
}

.files {
    display: flex;
    flex-direction: column;
    justify-content: space-between;
    flex: 1;
    padding-left: 4px;
}

.files table {
    width: 100%;
    border-collapse: collapse;
}

.files th {
    height: 32px;
    padding: 0 0 4px 17px;
    color: #4c607a;
    font-weight: normal;
    text-align: left;
    position: relative;
}

.sort {
    position: absolute;
    left: 136px;
    top: 0;
    width: 10px;
    height: 8px;
    color: #777;
}

.files td {
    display: flex;
    align-items: center;
    gap: 4px;
    height: 21px;
    padding: 0 0 0 18px;
}

.scroll-h {
    display: flex;
    height: 15px;
    background-color: #f0f0f0;
    color: #444;
}

.scroll-h button {
    width: 17px;
}

.scroll-h .thumb {
    flex: 1;
    background-color: #cdcdcd;
}

.status {
    height: 23px;
    padding: 4px 14px;
    color: #33475f;
    flex: none;
}

/* Watermark over the lower right corner */
.watermark {
    position: absolute;
    right: 48px;
    bottom: 48px;
    display: flex;
    align-items: center;
    gap: 6px;
    font-family: "Roboto", sans-serif;
    font-size: 32px;
    line-height: 64px;
    color: rgba(255, 255, 255, 0.6);
    text-shadow: 0 0 2px rgba(60, 70, 90, 0.4);
}

.watermark svg {
    width: 56px;
    height: 64px;
    fill: none;
    stroke: rgba(255, 255, 255, 0.6);
    stroke-width: 4px;
    filter: drop-shadow(0 0 1px rgba(60, 70, 90, 0.4));
}

/* Taskbar */
.taskbar {
    position: absolute;
    left: 0;
    right: 0;
    bottom: 0;
    display: flex;
    height: 40px;
    background: linear-gradient(90deg, #001722, #00131f 50%, #000918);
    color: #fff;
}

.start {
    width: 48px;
}

.start svg {
    width: 16px;
    height: 16px;
    fill: #fff;
}

.search {
    display: flex;
    align-items: center;
    width: 288px;
    padding-left: 11px;
    gap: 9px;
    background-color: #f0f0f0;
    border: 1px solid #bcbcbc;
}

.search svg {
    width: 18px;
    height: 18px;
    fill: none;
    stroke: #222;
    stroke-width: 1.4px;
}

.search input {
    flex: 1;
    min-width: 0;
    padding: 0;
    border: none;
    outline: none;
    background: none;
    font-family: inherit;
    font-size: 14px;
}

.search input::placeholder {
    color: #3a3a3a;
    opacity: 1;
}

.apps {
    display: flex;
    gap: 1px;
}

.apps button {
    width: 48px;
}

.apps .view {
    margin-right: 2px;
}

.apps svg {
    width: 24px;
    height: 24px;
}

.apps .view svg {
    width: 18px;
    height: 18px;
    fill: none;
    stroke: #fff;
}

.apps .running {
    background: linear-gradient(#76b9ed, #76b9ed) center bottom / 40px 2px no-repeat;
}

.apps .current {
    background-color: #33454f;
    border-bottom: 2px solid #76b9ed;
}

.tray {
    display: flex;
    align-items: center;
    margin-left: auto;
}

.tray button {
    width: 24px;
    height: 40px;
}

.tray svg {
    width: 18px;
    height: 18px;
    fill: none;
    stroke: #fff;
}

.clock {
    display: flex;
    flex-direction: column;
    width: 64px;
    line-height: 18px;
    text-align: center;
}

.tray .notes {
    width: 40px;
}

.peek {
    width: 1px;
    height: 40px;
    margin: 0 4px 0 8px;
    background-color: #55606a;
}
```
